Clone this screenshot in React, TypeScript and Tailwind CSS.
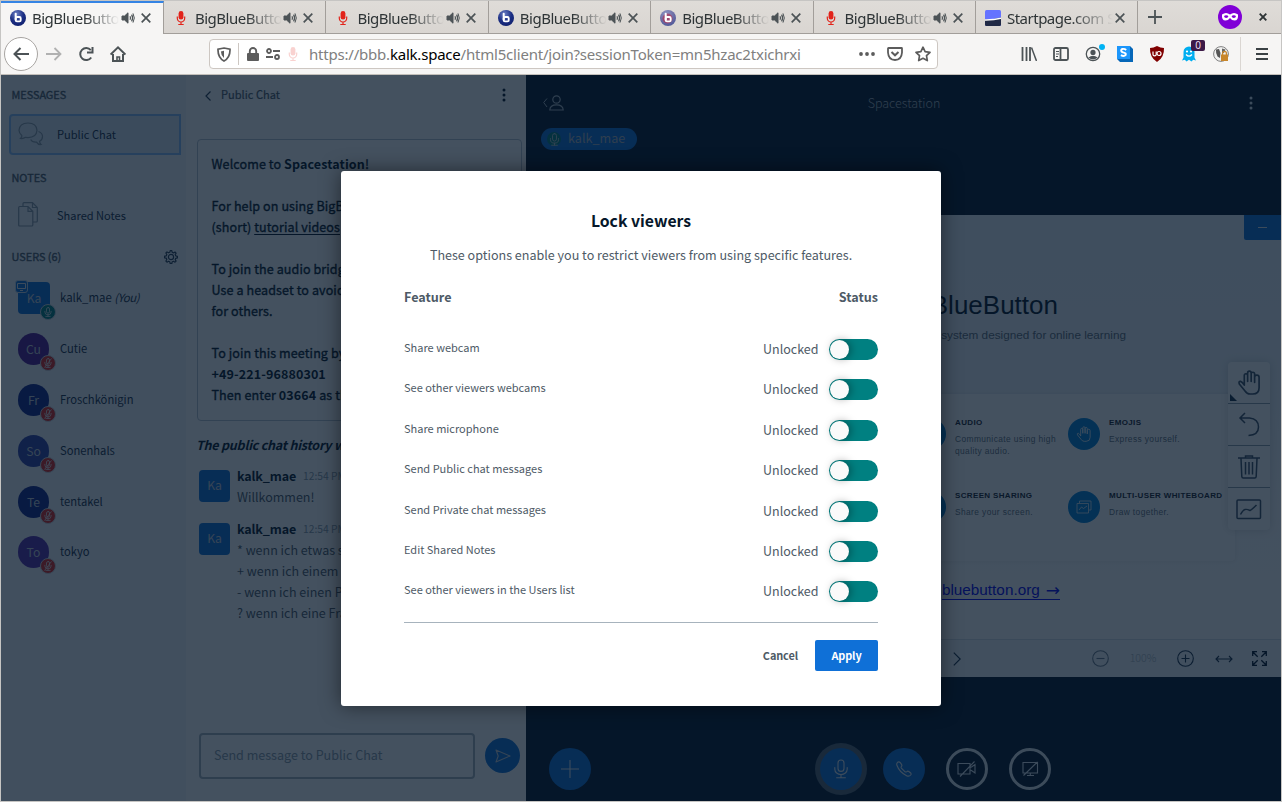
import type { ReactNode } from "react";

const cjk = "font-['Noto_Sans_CJK_SC',sans-serif]";
const semi = "[-webkit-text-stroke:0.35px_currentColor]";

/* ---------- Icons ---------- */

function BbbLogo({ muted = false }: { muted?: boolean }) {
  return (
    <svg width="16" height="16" viewBox="0 0 16 16" className="shrink-0">
      <defs>
        <radialGradient id={muted ? "lgm" : "lg"} cx="0.4" cy="0.25" r="0.8">
          <stop offset="0" stopColor={muted ? "#8d97c4" : "#6c7fc4"} />
          <stop offset="0.55" stopColor={muted ? "#6f6fa6" : "#1c2f84"} />
          <stop offset="1" stopColor={muted ? "#4c5698" : "#10206e"} />
        </radialGradient>
      </defs>
      <circle cx="8" cy="8" r="8" fill={muted ? "url(#lgm)" : "url(#lg)"} />
      {muted && <circle cx="7.500" cy="8.500" r="5" fill="#b2304f" opacity="0.65" />}
      <path d="M5.7 3.8V9.6" stroke="#fff" strokeWidth="2" strokeLinecap="round" />
      <rect x="5.7" y="7" width="5" height="4.400" rx="1.2" fill="none" stroke="#fff" strokeWidth="1.9" />
    </svg>
  );
}

function RedMic({ className = "" }: { className?: string }) {
  return (
    <svg width="16" height="16" viewBox="0 0 16 16" className={`shrink-0 ${className}`}>
      <rect x="5.6" y="1" width="4.8" height="8.6" rx="2.4" fill="#e2231a" />
      <path d="M4.3 6.5v1.8a3.7 3.7 0 0 0 7.4 0V6.5M8 12v2.5M5.3 14.5h5.4" fill="none" stroke="#e2231a" strokeWidth="1.2" />
    </svg>
  );
}

function Speaker() {
  return (
    <svg width="16" height="16" viewBox="0 0 16 16" fill="none" stroke="#4c5356" className="shrink-0">
      <path d="M2 6h2.6L8 2.8v10.4L4.6 10H2z" fill="#4c5356" strokeWidth="1" />
      <path d="M10 6.2q1 1.8 0 3.6M11.6 4.6q2 3.4 0 6.8" strokeWidth="1.2" />
      <path d="M13 3.4q2.6 4.6 0 9.2" strokeWidth="1" />
    </svg>
  );
}

function Cross() {
  return (
    <svg width="10" height="10" viewBox="0 0 10 10" className="shrink-0">
      <path d="M0.7 0.7 9.3 9.3M9.3 0.7 0.7 9.3" stroke="#4c5356" strokeWidth="1.7" />
    </svg>
  );
}

function StartpageIcon() {
  return (
    <svg width="16" height="16" viewBox="0 0 16 16" className="shrink-0">
      <rect width="16" height="16" rx="1.5" fill="#6573ff" />
      <path d="M0 9.6Q8 9.6 16 7.6V14.5Q16 16 14.5 16H1.5Q0 16 0 14.5Z" fill="#202945" />
      <path d="M0 9.3Q9 9.4 16 7.6V9Q9 10.8 0 10.7Z" fill="#fff" />
    </svg>
  );
}

function MicGlyph({ size, color, muted = false, w = 1.1 }: { size: number; color: string; muted?: boolean; w?: number }) {
  return (
    <svg width={size} height={size} viewBox="0 0 20 20" fill="none" stroke={color} strokeWidth={w} strokeLinecap="round">
      <rect x="7" y="1" width="6" height="11.4" rx="3" />
      <path d="M3.8 8.6v1.6a6.2 5.4 0 0 0 12.4 0V8.6M10 15.6v3M5.6 18.8h8.8" />
      {muted && <path d="M16.5 1.5 3.5 18.5" />}
    </svg>
  );
}

function Hand({ size, w }: { size: number; w: number }) {
  return (
    <svg width={size} height={size} viewBox="0 0 24 24" fill="none" stroke="currentColor" strokeWidth={w} strokeLinecap="round" strokeLinejoin="round">
      <path d="M7 14.5V5.2a1.6 1.6 0 0 1 3.2 0V11V2.8a1.7 1.7 0 0 1 3.4 0V11V3.8a1.6 1.6 0 0 1 3.3 0V12V7a1.5 1.5 0 0 1 4.3 0V17q0 6-6 6H12.5q-3 0-4.6-2.6L2.2 13.4q-.9-2.6 1.2-2.5Q5 11.4 7 14.5" />
    </svg>
  );
}

/* ---------- Browser chrome ---------- */

function Tab({ icon, active = false, title = "BigBlueButton", sound = true }: { icon: ReactNode; active?: boolean; title?: string; sound?: boolean }) {
  return (
    <div
      className={`flex h-[33px] shrink-0 items-center border-r border-[#a29e9a] pl-[9px] ${
        active ? "w-[163px] border-t-2 border-t-[#3584e4] bg-[#f6f5f4] pb-[2px] pr-[12px]" : "w-[162.400px] border-b border-b-[#a29e9a] pr-[12px] pt-[1px]"
      }`}
    >
      {icon}
      <div
        className={`ml-[6px] overflow-hidden whitespace-nowrap text-[15px] leading-[24px] tracking-[-0.5px] text-[#2e3436] [mask-image:linear-gradient(to_right,#000_60%,transparent_100%)] ${
          sound ? "w-[87px]" : "w-[106px]"
        }`}
      >
        {title}
      </div>
      <div className="ml-auto flex items-center gap-[5px]">
        {sound && <Speaker />}
        <Cross />
      </div>
    </div>
  );
}

function TabBar() {
  return (
    <div className="flex h-[33px] bg-[linear-gradient(#dfdcd8,#d9d5d1)]">
      <Tab active icon={<BbbLogo />} />
      <Tab icon={<RedMic />} />
      <Tab icon={<RedMic />} />
      <Tab icon={<BbbLogo />} />
      <Tab icon={<BbbLogo muted />} />
      <Tab icon={<RedMic />} />
      <Tab icon={<StartpageIcon />} title="Startpage.com S" sound={false} />
      <div className="flex flex-1 items-center border-b border-[#a29e9a] pl-[10px] pr-[14px]">
        <svg width="14" height="14" viewBox="0 0 14 14">
          <path d="M7 0v14M0 7h14" stroke="#4c5356" strokeWidth="1.8" />
        </svg>
        <svg width="24" height="24" viewBox="0 0 24 24" className="ml-auto">
          <circle cx="12" cy="12" r="12" fill="#8000d7" />
          <path d="M4 9.500Q8 6.500 12 9.500Q16 6.500 20 9.500Q20.600 15.500 16.500 15.500Q13.800 15.500 12 13Q10.200 15.500 7.500 15.500Q3.400 15.500 4 9.500Z" fill="#fff" />
          <ellipse cx="8.200" cy="11.600" rx="2" ry="1.300" fill="#8000d7" />
          <ellipse cx="15.800" cy="11.600" rx="2" ry="1.300" fill="#8000d7" />
        </svg>
        <svg width="8" height="8" viewBox="0 0 8 8" className="ml-[17px]">
          <path d="M.7.7 7.300 7.300M7.300.7.7 7.300" stroke="#2e3436" strokeWidth="1.900" />
        </svg>
      </div>
    </div>
  );
}

function NavBar() {
  return (
    <div className="flex h-[41px] items-center border-b border-[#c3bfba] bg-[#f6f5f4] pl-[3px] pr-[12px]">
      <div className="flex size-[34px] items-center justify-center rounded-full border border-[#a8a5a2] bg-white">
        <svg width="16" height="14" viewBox="0 0 16 14" fill="none" stroke="#4c5356" strokeWidth="2">
          <path d="M1.500 7H16M7.500 1 1.500 7l6 6" />
        </svg>
      </div>
      <svg width="16" height="14" viewBox="0 0 16 14" fill="none" stroke="#b1b1b1" strokeWidth="1.800" className="ml-[8px]">
        <path d="M0 7h14.500M8.500 1l6 6-6 6" />
      </svg>
      <svg width="16" height="16" viewBox="0 0 16 16" fill="none" stroke="#4c5356" strokeWidth="2" className="ml-[16px]">
        <path d="M13.200 11.500A6 6 0 1 1 12.800 4.200" />
        <path d="M14.500 1v5.500H9" />
      </svg>
      <svg width="16" height="16" viewBox="0 0 16 16" fill="none" stroke="#4c5356" strokeWidth="2" className="ml-[16px]">
        <path d="M.6 8.600 8 1.400l7.400 7.200M3 8v7h10V8" />
        <path d="M7 15v-4h2.500v4" strokeWidth="1.600" />
      </svg>

      <div className="ml-[83px] flex h-[30px] w-[729px] items-center rounded-[4px] border border-[#cdc7c2] bg-white pl-[7px] pr-[6px]">
        <svg width="14" height="15" viewBox="0 0 14 15" fill="none" stroke="#5c5c5c" strokeWidth="1.700">
          <path d="M7 1 13 2.200Q13.300 10.500 7 14Q.7 10.500 1 2.200Z" />
          <path d="M7 3.800v7.300Q4 8.500 3.900 4.400Z" fill="#5c5c5c" stroke="none" />
        </svg>
        <div className="ml-[7px] h-[22px] w-px bg-[#cdc7c2]" />
        <svg width="12" height="14" viewBox="0 0 12 14" className="ml-[8px]">
          <rect x="0" y="6" width="12" height="8" rx="1" fill="#5c5c5c" />
          <path d="M2.800 6.500V4.200a3.200 3.200 0 0 1 6.400 0v2.300" fill="none" stroke="#5c5c5c" strokeWidth="1.900" />
        </svg>
        <svg width="14" height="12" viewBox="0 0 14 12" fill="none" stroke="#5c5c5c" strokeWidth="1.800" className="ml-[7px]">
          <circle cx="3" cy="3" r="2" />
          <circle cx="11" cy="9" r="2" />
          <path d="M7 3h7M0 9h7" />
        </svg>
        <RedMic className="ml-[5px] opacity-20" />
        <div className="ml-[8px] whitespace-nowrap text-[15px] tracking-[-0.21px] text-[#808080]">
          https://bbb.<span className="text-black">kalk.space</span>/html5client/join?sessionToken=mn5hzac2txichrxi
        </div>
        <svg width="16" height="4" viewBox="0 0 16 4" fill="#5c5c5c" className="ml-auto">
          <circle cx="2" cy="2" r="1.900" />
          <circle cx="8" cy="2" r="1.900" />
          <circle cx="14" cy="2" r="1.900" />
        </svg>
        <svg width="16" height="14" viewBox="0 0 16 14" fill="none" stroke="#5c5c5c" strokeWidth="1.800" className="ml-[12px]">
          <path d="M1.500 1h13Q15 1 15 1.500V5.500Q14.500 13 8 13Q1.500 13 1 5.500V1.500Q1 1 1.500 1Z" />
          <path d="m4.500 5 3.500 3.300L11.500 5" strokeWidth="2" />
        </svg>
        <svg width="16" height="16" viewBox="0 0 16 16" fill="none" stroke="#5c5c5c" strokeWidth="1.700" strokeLinejoin="round" className="ml-[12px]">
          <path d="m8 1.200 2.100 4.400 4.900.7-3.500 3.400.8 4.900L8 12.300l-4.300 2.300.8-4.900L1 6.300l4.900-.7Z" />
        </svg>
      </div>

      <svg width="16" height="14" viewBox="0 0 16 14" fill="none" stroke="#4c5356" strokeWidth="1.800" className="ml-[83px]">
        <path d="M1.500 0v14M5.500 0v14M9 0v14" />
        <path d="M10.500.5 15.500 14" strokeWidth="1.500" />
      </svg>
      <svg width="16" height="14" viewBox="0 0 16 14" fill="none" stroke="#4c5356" strokeWidth="1.800" className="ml-[16px]">
        <rect x="1" y="1" width="14" height="12" rx="1.500" />
        <path d="M7.500 1v12" />
        <path d="M3 4.500h3M3 7h3M3 9.500h2" strokeWidth="1" />
      </svg>
      <div className="relative ml-[16px] size-[16px]">
        <svg width="16" height="16" viewBox="0 0 16 16">
          <circle cx="8" cy="8" r="6.700" fill="none" stroke="#4c5356" strokeWidth="1.300" />
          <circle cx="8" cy="6.400" r="2.600" fill="#4c5356" />
          <path d="M3.400 11.500Q8 8 12.600 11.500Q8 15.500 3.400 11.500Z" fill="#4c5356" />
        </svg>
        <div className="absolute -right-[4px] -top-[2px] size-[6px] rounded-full bg-[#00b3f4]" />
      </div>
      <svg width="16" height="16" viewBox="0 0 16 16" className="ml-[16px]">
        <path d="M0 0H13L16 3V16H3L0 13Z" fill="#0667b8" />
        <rect width="13" height="13" fill="#1c96fb" />
        <path d="M9.200 4Q7.500 2.600 5.500 3Q3.600 3.700 4.400 5.400Q5 6.300 6.800 6.600Q9.300 7.200 8.700 8.900Q7 10.900 3.900 9.200" fill="none" stroke="#fff" strokeWidth="1.900" />
      </svg>
      <svg width="16" height="16" viewBox="0 0 16 16" className="ml-[16px]">
        <path d="M8 0Q11.500 1.800 15 2Q15.500 11.500 8 16Q.5 11.500 1 2Q4.500 1.800 8 0Z" fill="#800000" />
        <path d="M4 5.500v3q0 1.300 1.600 1.300T7.200 8.500v-3" fill="none" stroke="#fff" strokeWidth="1.200" />
        <circle cx="10" cy="7.500" r="2" fill="none" stroke="#fff" strokeWidth="1.200" />
      </svg>
      <div className="relative ml-[16px] size-[16px]">
        <svg width="16" height="16" viewBox="0 0 16 16">
          <path d="M2.500 6a5.500 5.500 0 0 1 11 0v5.500l1.500 3-2.800-.8L10.500 15.500 8 13.800 5.500 15.500 3.800 13.700 1 14.500l1.500-3Z" fill="#00aef0" />
          <circle cx="6" cy="5.500" r="1.100" fill="#fff" />
          <circle cx="10" cy="5.500" r="1.100" fill="#fff" />
          <path d="M5 8.500q3 3.400 6 0" fill="none" stroke="#fff" strokeWidth="1.200" />
        </svg>
        <div className="absolute -right-[8px] -top-[6px] flex h-[11px] w-[14px] items-center justify-center rounded-[2px] bg-[#3d1a47] text-[10px] leading-[11px] text-[#e8dff0]">
          0
        </div>
      </div>
      <svg width="16" height="16" viewBox="0 0 16 16" className="ml-[16px]">
        <circle cx="8" cy="8" r="7.400" fill="#f1f1f0" stroke="#808080" strokeWidth="1" />
        <path d="M3 3.500 6 3l1.500 4L7 12 4.500 10.500 3.200 7Z" fill="#555" />
        <path d="M9 2.500l3.500 1L11 7H9Z" fill="#666" />
        <rect x="8" y="8.500" width="7" height="6.500" fill="#c8862b" />
        <path d="M9.600 9V7.300a1.900 1.900 0 0 1 3.800 0V9" fill="none" stroke="#c8862b" strokeWidth="1.300" />
      </svg>
      <div className="ml-[11px] h-[34px] w-px bg-[#dad6d2]" />
      <svg width="12" height="12" viewBox="0 0 12 12" className="ml-auto mr-px">
        <path d="M0 1h12M0 6h12M0 11h12" stroke="#3b4144" strokeWidth="1.900" />
      </svg>
    </div>
  );
}

/* ---------- Sidebar ---------- */

const users = [
  { initials: "Cu", name: "Cutie", color: "bg-[#4f1a94]" },
  { initials: "Fr", name: "Froschkönigin", color: "bg-[#12248a]" },
  { initials: "So", name: "Sonenhals", color: "bg-[#3040a8]" },
  { initials: "Te", name: "tentakel", color: "bg-[#12248a]" },
  { initials: "To", name: "tokyo", color: "bg-[#552dac]" },
];

function Badge({ muted }: { muted: boolean }) {
  return (
    <div
      className={`absolute -bottom-[6px] flex size-[16px] items-center justify-center rounded-full border border-[#c9d1d9] ${
        muted ? "-right-[7px] bg-[#df2721]" : "-right-[6px] bg-[#008081]"
      }`}
    >
      <MicGlyph size={10} color="#e3e8ec" muted={muted} w={1.6} />
    </div>
  );
}

function Sidebar() {
  return (
    <div className="flex w-[185px] shrink-0 flex-col bg-[#f3f6f9] text-[#1b3048]">
      <div className={`mt-[10px] h-[18px] pl-[10.500px] text-[10.900px] leading-[18px] tracking-[-0.050px] text-[#4e5a66] ${semi}`}>MESSAGES</div>
      <div className="ml-[8px] mt-[11px] flex h-[41px] w-[172px] items-center rounded-l-[4px] border-2 border-[#86bcf5] bg-[#dae7f2] pb-px pl-[7px]">
        <svg width="26" height="24" viewBox="0 0 26 24" fill="none" stroke="#8b9aa8" strokeWidth="1.200">
          <path d="M2.500 16.500Q4.300 14.800 3.800 13.500Q1 11 1 8.300Q1.500 1 10 1T19 8.300Q18.500 15.600 10 15.600L7.500 15.300Q5.500 16.900 2.500 16.500Z" />
          <path d="M20.500 9.500q4 1.500 4 5t-3 4.700q.3 2.300 1.500 3.300-3 .3-4.500-2.400-4.500.3-5.800-2.600" />
        </svg>
        <span className="ml-[13px] text-[11.100px] leading-[18px]">Public Chat</span>
      </div>
      <div className={`mt-[13px] h-[18px] pl-[10.500px] text-[10.900px] leading-[18px] text-[#4e5a66] ${semi}`}>NOTES</div>
      <div className="mt-[8px] flex h-[41px] items-center pl-[17px]">
        <svg width="20" height="25" viewBox="0 0 20 25" fill="none" stroke="#8b9aa8" strokeWidth="1.200">
          <path d="M5 4.300V1.600Q5 .7 6 .7H14.500L19.300 5.500V19q0 1-1 1H15M14.500.7V5.500H19.300" />
          <path d="M1.600 4.500H10L14.800 9.300V23q0 1-1 1H1.700q-1 0-1-1V5.500q0-1 .9-1M10 4.500V9.300H14.800" />
        </svg>
        <span className="ml-[19px] text-[11.050px] leading-[18px]">Shared Notes</span>
      </div>
      <div className="mt-[12px] flex h-[18px] items-center pl-[10.500px] pr-[8px]">
        <span className={`text-[10.900px] leading-[18px] text-[#4e5a66] ${semi}`}>USERS (6)</span>
        <svg width="14" height="14" viewBox="0 0 14 14" fill="none" stroke="#2b3f55" strokeWidth="1.200" strokeLinejoin="round" className="ml-auto mt-px">
          <path d="M6.200.7h1.600l.4 1.700 1.300.5 1.500-.9 1.100 1.100-.9 1.500.5 1.300 1.700.4v1.600l-1.700.4-.5 1.300.9 1.500-1.100 1.100-1.500-.9-1.300.5-.4 1.700H6.200l-.4-1.700-1.300-.5-1.500.9L1.900 11l.9-1.500-.5-1.300-1.700-.4V6.200l1.700-.4.5-1.300L1.900 3 3 1.900l1.500.9 1.300-.5Z" />
          <circle cx="7" cy="7" r="2.600" />
        </svg>
      </div>
      <div className="mt-[17px] flex h-[32px] items-center pl-[17px]">
        <div className="relative flex h-[32px] w-[32px] items-center justify-center rounded-[4px] bg-[#0f70d7] text-[12.200px] text-[#c3ccd5]">
          Ka
          <div className="absolute -left-[3px] -top-[2px] flex size-[13px] items-center justify-center rounded-[3px] border border-[#c3d6ea] bg-[#0f70d7]">
            <svg width="9" height="8" viewBox="0 0 9 8" fill="none" stroke="#dfe8f0" strokeWidth="1">
              <path d="M.5.500h8v5h-8ZM3 7.500h3" />
            </svg>
          </div>
          <Badge muted={false} />
        </div>
        <span className="-mt-[3px] ml-[10px] text-[11.400px] leading-[18px]">
          kalk_mae <i className="tracking-[-0.450px]">(You)</i>
        </span>
      </div>
      <div className="mt-[19.300px] flex flex-col gap-[18.800px]">
        {users.map((u) => (
          <div key={u.name} className="flex h-[32px] items-center pl-[17px]">
            <div className={`relative flex h-[32px] w-[31px] items-center justify-center rounded-full text-[12.200px] text-[#c3ccd5] ${u.color}`}>
              {u.initials}
              <Badge muted />
            </div>
            <span className="-mt-[2px] ml-[11px] text-[11.200px] leading-[18px]">{u.name}</span>
          </div>
        ))}
      </div>
    </div>
  );
}

/* ---------- Chat ---------- */

function Message({ children }: { children: ReactNode }) {
  return (
    <div className="flex gap-[7px] pl-[3px]">
      <div className="mt-[5px] flex h-[32px] w-[31px] shrink-0 items-center justify-center rounded-[4px] bg-[#0f70d7] pb-px text-[12.200px] text-[#c3ccd5]">Ka</div>
      <div className="whitespace-nowrap text-[12.500px] leading-[21px] text-[#4e5a66]">
        <div className="flex items-center">
          <span className="text-[12.500px] font-bold tracking-[-0.130px] text-[#06172a]">kalk_mae</span>
          <span className="ml-[7px] text-[10.300px] text-[#8b9aa8]">12:54 PM</span>
        </div>
        {children}
      </div>
    </div>
  );
}

function ChatPanel() {
  return (
    <div className="flex w-[340px] shrink-0 flex-col bg-white pl-[10px] text-[#06172a]">
      <div className="mt-[10px] flex h-[20px] items-center pl-[9px] pr-[20px]">
        <svg width="6" height="10" viewBox="0 0 6 10" fill="none" stroke="#2b3f55" strokeWidth="1.200" className="mt-[2px]">
          <path d="M5.500.5 1 5l4.500 4.500" />
        </svg>
        <span className="-mt-[2px] ml-[10px] text-[11.100px] leading-[20px] text-[#4e5a66] [-webkit-text-stroke:0.2px_currentColor]">Public Chat</span>
        <svg width="4" height="14" viewBox="0 0 4 14" fill="#06172a" className="ml-auto">
          <circle cx="2" cy="2" r="1.500" />
          <circle cx="2" cy="7" r="1.500" />
          <circle cx="2" cy="12" r="1.500" />
        </svg>
      </div>
      <div className={`ml-px mt-[34px] h-[282px] w-[325px] overflow-hidden whitespace-nowrap rounded-[4px] border border-[#b8c3ce] pl-[13.500px] pt-[13px] text-[12.550px] leading-[21px] tracking-[0.090px] ${semi}`}>
        <p>
          Welcome to <b className="[-webkit-text-stroke:0]">Spacestation</b>!
        </p>
        <br />
        <p>For help on using BigBlue</p>
        <p>
          (short) <u className="underline-offset-2">tutorial videos</u>
        </p>
        <br />
        <p>To join the audio bridge</p>
        <p>Use a headset to avoid</p>
        <p>for others.</p>
        <br />
        <p>To join this meeting by</p>
        <p>
          <b className="[-webkit-text-stroke:0]">+49-221-96880301</b>
        </p>
        <p>
          Then enter <b className="[-webkit-text-stroke:0]">03664</b> as the
        </p>
      </div>
      <div className="mt-[13px] whitespace-nowrap text-[12.500px] font-bold italic leading-[21px] tracking-[-0.220px]">The public chat history was</div>
      <div className="mt-[10px]">
        <Message>
          <p>Willkommen!</p>
        </Message>
      </div>
      <div className="mt-[10.500px]">
        <Message>
          <p>* wenn ich etwas s</p>
          <p>+ wenn ich einem</p>
          <p>- wenn ich einen P</p>
          <p>? wenn ich eine Fra</p>
        </Message>
      </div>
      <div className="mb-[22px] mt-auto flex items-center pl-[3px]">
        <div className="flex h-[46px] w-[276px] items-center rounded-[4px] border-2 border-[#a7b3bd] pb-[2px] pl-[13px] text-[12.550px] text-[#8b9aa8]">Send message to Public Chat</div>
        <div className="mb-px ml-[10px] flex size-[35px] items-center justify-center rounded-full bg-[#0f70d7]">
          <svg width="16" height="14" viewBox="0 0 16 14" fill="none" stroke="#c3ccd5" strokeWidth="1.100" strokeLinejoin="round">
            <path d="M1 1 15 7 1 13 3.200 7Z" />
          </svg>
        </div>
      </div>
    </div>
  );
}

/* ---------- Media area ---------- */

function Feature({ title, lines, icon }: { title: string; lines: string[]; icon: ReactNode }) {
  return (
    <div className="flex h-[73px] w-[154px]">
      <div className="flex size-[32px] shrink-0 items-center justify-center rounded-full bg-[#0080d8] text-[#e6eef5]">{icon}</div>
      <div className="-mt-[1px] ml-[9px] whitespace-nowrap">
        <div className="text-[8px] font-bold leading-[11px] tracking-[0.350px] text-[#18222d]">{title}</div>
        <div className="mt-[5px] text-[8.400px] leading-[12px] tracking-[0.400px] text-[#66717c]">
          {lines.map((l) => (
            <div key={l}>{l}</div>
          ))}
        </div>
      </div>
    </div>
  );
}

function BoardIcon() {
  return (
    <svg width="16" height="14" viewBox="0 0 16 14" fill="none" stroke="currentColor" strokeWidth="0.800">
      <path d="M1 3.500h11.500V13H1ZM3.500 3V1H15v9h-2M3 10l2.500-3 2 1.500L11 6" />
    </svg>
  );
}

function Slide() {
  return (
    <div className="relative flex h-[424px] flex-col overflow-hidden bg-[linear-gradient(#ebf2fa_0%,#eff4f9_45%,#fbfcfd_70%,#ffffff_100%)] font-['Liberation_Sans',Arial,sans-serif]">
      <div className="mt-[75px] pr-[223px] text-right text-[26px] leading-[30px] text-[#06172a]">BlueButton</div>
      <div className="mt-[8px] whitespace-nowrap pr-[155px] text-right text-[11.750px] leading-[14px] text-[#5d6a77]">
        system designed for online learning
      </div>
      <div className="ml-[46px] mt-[52px] flex h-[167px] w-[663px] flex-wrap content-start justify-end rounded-[4px] bg-white pr-[13px] pt-[24px] shadow-[0_0_4px_rgba(0,0,0,0.08)]">
        <Feature title="AUDIO" lines={["Communicate using high", "quality audio."]} icon={<MicGlyph size={16} color="#e6eef5" />} />
        <Feature title="EMOJIS" lines={["Express yourself."]} icon={<Hand size={16} w={1.3} />} />
        <div className="w-full" />
        <Feature title="SCREEN SHARING" lines={["Share your screen."]} icon={<BoardIcon />} />
        <Feature title="MULTI-USER WHITEBOARD" lines={["Draw together."]} icon={<BoardIcon />} />
      </div>
      <div className="mt-[20px] flex justify-end whitespace-nowrap pr-[221px] text-[15.300px] leading-[20px] text-[#0404ee]">
        <div className="flex h-[19px] items-center border-b border-[#0404ee]">
          bluebutton.org
          <span className="ml-[6px] font-['DejaVu_Sans',sans-serif] text-[17px]">→</span>
        </div>
      </div>

      <div className="absolute right-0 top-0 flex h-[25px] w-[37px] items-center justify-center rounded-bl-[2px] bg-[#0f70d7]">
        <div className="h-px w-[9px] bg-[#dfe8f0]" />
      </div>
      <div className="absolute right-[11px] top-[147px] w-[42px] divide-y divide-[#8b9aa8] rounded-[4px] bg-white text-[#3c4f64] shadow-[0_0_10px_rgba(0,0,0,0.150)]">
        <div className="relative flex h-[42px] items-center justify-center">
          <Hand size={25} w={1.6} />
          <div className="absolute bottom-[2px] left-[2px] size-0 border-b-[7px] border-r-[7px] border-b-[#1b3048] border-r-transparent" />
        </div>
        <div className="flex h-[42px] items-center justify-center">
          <svg width="22" height="25" viewBox="0 0 22 25" fill="none" stroke="currentColor" strokeWidth="1.500">
            <path d="M7 1 2 6l5 5M2 6h9.500q9 1 9 9t-10 8.500" />
          </svg>
        </div>
        <div className="flex h-[42px] items-center justify-center">
          <svg width="22" height="24" viewBox="0 0 22 24" fill="none" stroke="currentColor" strokeWidth="1.500">
            <path d="M0 3h22M7.500 3V1h7v2M3 3.500l.8 18q.1 1.500 1.500 1.500h11.400q1.400 0 1.500-1.500l.8-18M7.500 7v12.500M11 7v12.500M14.500 7v12.500" />
          </svg>
        </div>
        <div className="flex h-[42px] items-center justify-center">
          <svg width="26" height="21" viewBox="0 0 26 21" fill="none" stroke="currentColor" strokeWidth="1.500">
            <rect x="1" y="1" width="23.500" height="18.500" rx="1" />
            <path d="M4.500 15.500Q7 11 9 10.500T14 11.500Q16 10.500 20.500 6" />
          </svg>
        </div>
      </div>
    </div>
  );
}

function SlideControls() {
  return (
    <div className="flex h-[38px] items-center border-t border-[#d5dde5] bg-[#f3f6f9] pr-[14px] text-[#1b3048]">
      <svg width="8" height="14" viewBox="0 0 8 14" fill="none" stroke="currentColor" strokeWidth="1.200" className="ml-[427px]">
        <path d="m.8.6 6.400 6.400L.8 13.400" />
      </svg>
      <svg width="17" height="17" viewBox="0 0 17 17" fill="none" stroke="#6a7a8b" strokeWidth="1.100" className="ml-auto">
        <circle cx="8.500" cy="8.500" r="7.800" />
        <path d="M4.500 8.500h8" />
      </svg>
      <span className="ml-[20px] w-[28px] text-center text-[10.700px] font-light text-[#a7b3bd]">100%</span>
      <svg width="17" height="17" viewBox="0 0 17 17" fill="none" stroke="currentColor" strokeWidth="1.100" className="ml-[20px]">
        <circle cx="8.500" cy="8.500" r="7.800" />
        <path d="M4.500 8.500h8M8.500 4.500v8" />
      </svg>
      <svg width="18" height="8" viewBox="0 0 18 8" fill="none" stroke="currentColor" strokeWidth="1.100" className="ml-[21px]">
        <path d="M1.500 4h15M4 1 1 4l3 3M14 1l3 3-3 3" />
      </svg>
      <svg width="15" height="15" viewBox="0 0 15 15" fill="none" stroke="#06172a" strokeWidth="1.300" className="ml-[19px]">
        <path d="M.7 5V.7H5M.7.7l5 5M10 .7h4.300V5M14.300.7l-5 5M.7 10v4.300H5M.7 14.300l5-5M10 14.300h4.300V10M14.300 14.300l-5-5" />
      </svg>
    </div>
  );
}

function ActionsBar() {
  return (
    <div className="grid flex-1 grid-cols-[23px_42px_1fr_auto_230px] items-center pt-[59px] text-[#dfe8f0]">
      <span />
      <div className="flex size-[42px] items-center justify-center rounded-full bg-[#0f70d7]">
        <svg width="18" height="18" viewBox="0 0 18 18" stroke="currentColor" strokeWidth="1.100">
          <path d="M9 0v18M0 9h18" />
        </svg>
      </div>
      <span />
      <div className="flex items-center gap-[21px]">
        <div className="-mr-[5px] flex size-[52px] items-center justify-center rounded-full bg-[#53606e]">
          <div className="flex size-[42px] items-center justify-center rounded-full bg-[#0f70d7]">
            <MicGlyph size={20} color="currentColor" />
          </div>
        </div>
        <div className="flex size-[42px] items-center justify-center rounded-full bg-[#0f70d7]">
          <svg width="16" height="16" viewBox="0 0 16 16" fill="none" stroke="currentColor" strokeWidth="1.100">
            <path d="M1.600 1.300Q.3 2.600.9 4.300Q3.500 11.500 11 14.900Q13.200 15.700 14.700 14Q15.600 12.800 14.400 11.700L12.800 10.500Q11.700 9.700 10.800 10.600Q9.900 11.400 9.100 10.800L5.400 7.100Q4.700 6.300 5.400 5.500Q6.300 4.500 5.500 3.400L4.300 1.700Q3 .2 1.600 1.300Z" />
          </svg>
        </div>
        <div className="flex size-[42px] items-center justify-center rounded-full border-[3px] border-[#dfe5ea]">
          <svg width="20" height="16" viewBox="0 0 20 16" fill="none" stroke="currentColor" strokeWidth="1.100">
            <path d="M1 2.500h12v10.500H1ZM13 6.500l1.500-.5 3.500-2.500v8.500L14.500 9.500 13 9M17.500.5 3 15.500" />
          </svg>
        </div>
        <div className="flex size-[42px] items-center justify-center rounded-full border-[3px] border-[#dfe5ea]">
          <svg width="17" height="16" viewBox="0 0 17 16" fill="none" stroke="currentColor" strokeWidth="1.100">
            <path d="M1 1.500h14.500v10.500H1ZM5 14.500h7M8.300 12v2.500M15.500.8 1.500 14.500" />
          </svg>
        </div>
      </div>
    </div>
  );
}

function MediaArea() {
  return (
    <div className="flex min-w-0 flex-1 flex-col bg-[#06172a]">
      <div className="h-[140px] text-[#a9b3bd]">
        <div className="mt-[18px] grid h-[20px] grid-cols-[1fr_auto_1fr] items-center pl-[17px] pr-[28px]">
          <svg width="21" height="16" viewBox="0 0 21 16" fill="none" stroke="currentColor" strokeWidth="1.200">
            <path d="M4 3.500.7 7.500 4 12" strokeWidth="1" />
            <circle cx="13.500" cy="4.500" r="3.700" />
            <path d="M6.800 15Q7 9.800 13.500 9.800T20.200 15Z" />
          </svg>
          <span className="pl-[12px] text-[12.500px] font-light">Spacestation</span>
          <svg width="4" height="14" viewBox="0 0 4 14" fill="#dfe8f0" className="ml-auto">
            <circle cx="2" cy="2" r="1.500" />
            <circle cx="2" cy="7" r="1.500" />
            <circle cx="2" cy="12" r="1.500" />
          </svg>
        </div>
        <div className="ml-[15px] mt-[15px] flex h-[22px] w-[96px] items-center rounded-full bg-[#0f70d7] pl-[6px]">
          <div className="flex size-[14px] items-center justify-center rounded-full bg-[#008081]">
            <MicGlyph size={13} color="#b9c6cf" w={1.4} />
          </div>
          <span className="-mt-[2px] ml-[7px] text-[12.600px] leading-[20px] text-[#a9b3bd]">kalk_mae</span>
        </div>
      </div>
      <Slide />
      <SlideControls />
      <ActionsBar />
    </div>
  );
}

/* ---------- Lock viewers dialog ---------- */

const features = [
  "Share webcam",
  "See other viewers webcams",
  "Share microphone",
  "Send Public chat messages",
  "Send Private chat messages",
  "Edit Shared Notes",
  "See other viewers in the Users list",
];

function LockViewers() {
  return (
    <div className="absolute inset-0 flex items-start justify-center bg-[#06172a]/75 pt-[96px]">
      <div className="h-[535px] w-[600px] rounded-[3px] bg-white px-[63px] text-[#4e5a66] shadow-[0_0_20px_rgba(0,0,0,0.500)]">
        <h1 className="mt-[38px] text-center text-[15.750px] font-bold leading-[24px] text-[#06172a]">Lock viewers</h1>
        <p className="mt-[12px] whitespace-nowrap text-center text-[12.560px] leading-[20px]">These options enable you to restrict viewers from using specific features.</p>
        <div className="mt-[22px] flex justify-between text-[12.600px] font-bold leading-[20px]">
          <span>Feature</span>
          <span>Status</span>
        </div>
        <div className="mt-[22.300px]">
          {features.map((f) => (
            <div key={f} className="flex h-[40.400px] items-center">
              <span className="-mt-[5px] text-[11px] leading-[18px]">{f}</span>
              <span className="-mt-px ml-auto text-[12.500px] leading-[20px]">Unlocked</span>
              <div className="ml-[10.500px] flex h-[21px] w-[49px] items-center overflow-visible rounded-full bg-[#008081] pl-px">
                <div className="size-[19px] rounded-full bg-[#fafafa] shadow-[2px_0_8px_rgba(0,0,0,0.350)]" />
              </div>
            </div>
          ))}
        </div>
        <div className="mt-[9.900px] h-px bg-[#a7b3bd]" />
        <div className="mt-[17px] flex items-center justify-end text-[10.900px] font-bold leading-[18px] tracking-[-0.100px]">
          <button className="mr-[17px]">Cancel</button>
          <button className="h-[31px] w-[63px] rounded-[2px] bg-[#0f70d7] text-white">Apply</button>
        </div>
      </div>
    </div>
  );
}

export default function App() {
  return (
    <div className="flex h-[802px] w-[1282px] flex-col overflow-hidden border border-[#c6c5c3] bg-white font-['Noto_Sans',sans-serif]">
      <TabBar />
      <NavBar />
      <div className={`relative flex min-h-0 flex-1 ${cjk}`}>
        <Sidebar />
        <ChatPanel />
        <MediaArea />
        <LockViewers />
      </div>
    </div>
  );
}
